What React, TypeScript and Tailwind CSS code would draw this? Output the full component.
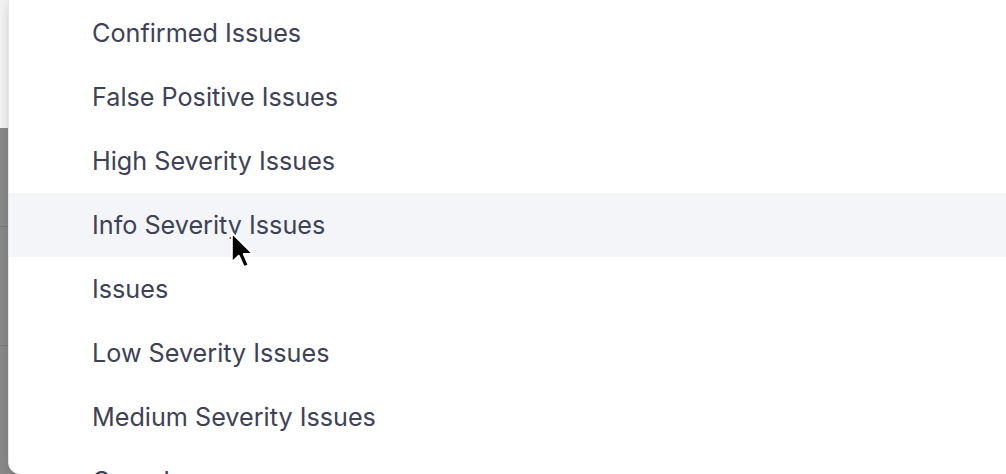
const ITEMS = [
  'Confirmed Issues',
  'False Positive Issues',
  'High Severity Issues',
  'Info Severity Issues',
  'Issues',
  'Low Severity Issues',
  'Medium Severity Issues',
  'Open Issues',
];

function Cursor() {
  return (
    <svg
      className="absolute left-[229px] top-[230px] pointer-events-none"
      width="26"
      height="40"
      viewBox="0 0 14 21.5"
    >
      <path
        d="M1.5 1.5 L1.5 17.5 L5.3 13.9 L8 20 L10.6 18.9 L8 12.9 L13 12.9 Z"
        fill="#000"
        stroke="#fff"
        strokeWidth="1.1"
        strokeLinejoin="round"
      />
    </svg>
  );
}

export default function App() {
  const hovered = 'Info Severity Issues';

  return (
    <div className="relative flex h-[474px] w-[1006px] overflow-hidden bg-[#8a8a8a] font-['Inter',sans-serif]">
      {/* backdrop behind the menu */}
      <div className="flex w-[8px] flex-col">
        <div className="h-[128px] bg-[#f3f3f5]" />
        <div className="h-[98px] bg-[#8a8a8a]" />
        <div className="h-px bg-[#777]" />
        <div className="h-[118px] bg-[#8a8a8a]" />
        <div className="h-px bg-[#7c7c7c]" />
        <div className="flex-1 bg-[#8a8a8a]" />
      </div>

      {/* menu panel */}
      <div className="flex-1 overflow-hidden rounded-bl-[12px] border-l border-[#e6e6ea] bg-white pt-px shadow-[0_4px_12px_rgba(0,0,0,0.15)]">
        {ITEMS.map((item) => (
          <div
            key={item}
            className={`flex h-[64px] items-center pl-[83px] pt-[2px] text-[25.2px] leading-none text-[#3d4257] ${
              item === hovered ? 'bg-[#f4f5f9]' : ''
            }`}
          >
            {item}
          </div>
        ))}
      </div>

      <Cursor />
    </div>
  );
}
